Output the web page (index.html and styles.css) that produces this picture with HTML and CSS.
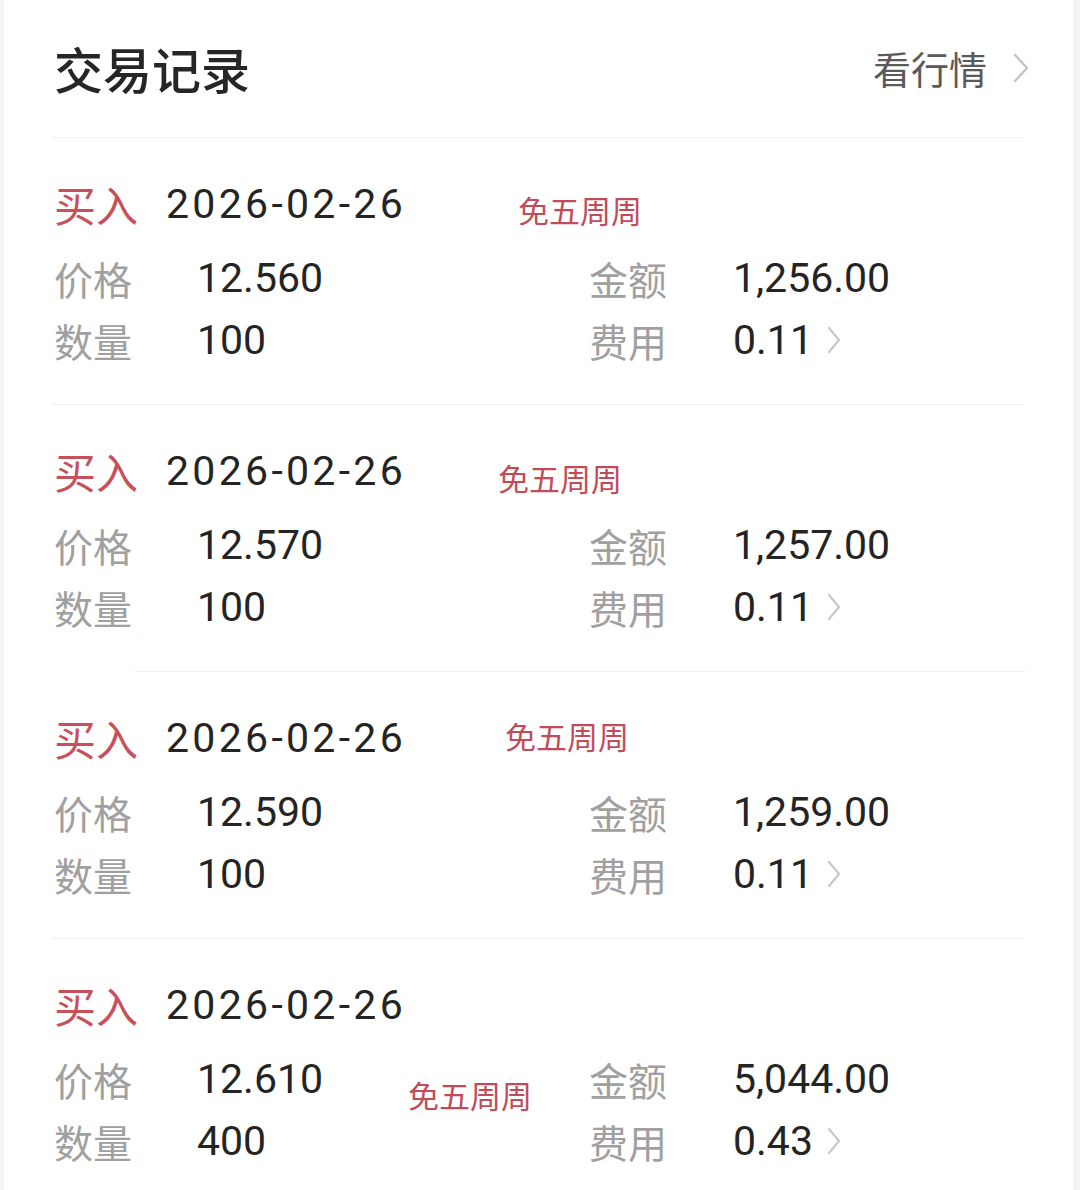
FILE: index.html
```html
<!DOCTYPE html>
<html lang="zh-CN">
<head>
<meta charset="utf-8">
<title>交易记录</title>
<link rel="stylesheet" href="styles.css">
</head>
<body>
<div class="page">
  <header class="header">
    <h1 class="title">交易记录</h1>
    <div class="market">看行情
      <svg class="chev-lg" viewBox="0 0 20 32" width="20" height="32"><path d="M4 3 L16 16 L4 29" fill="none" stroke="#c4c4c4" stroke-width="2.4" stroke-linecap="round" stroke-linejoin="round"/></svg>
    </div>
  </header>

  <section class="record">
    <div class="rec-head"><span class="side">买入</span><span class="date">2026-02-26</span></div>
    <div class="grid">
      <span class="lbl">价格</span><span class="val">12.560</span>
      <span class="lbl">金额</span><span class="val">1,256.00</span>
      <span class="lbl">数量</span><span class="val">100</span>
      <span class="lbl">费用</span><span class="val">0.11<svg class="chev" viewBox="0 0 18 30" width="18" height="30"><path d="M4 3 L14 15 L4 27" fill="none" stroke="#c8c8c8" stroke-width="2.2" stroke-linecap="round" stroke-linejoin="round"/></svg></span>
    </div>
    <span class="tag tag1">免五周周</span>
  </section>

  <section class="record short-line">
    <div class="rec-head"><span class="side">买入</span><span class="date">2026-02-26</span></div>
    <div class="grid">
      <span class="lbl">价格</span><span class="val">12.570</span>
      <span class="lbl">金额</span><span class="val">1,257.00</span>
      <span class="lbl">数量</span><span class="val">100</span>
      <span class="lbl">费用</span><span class="val">0.11<svg class="chev" viewBox="0 0 18 30" width="18" height="30"><path d="M4 3 L14 15 L4 27" fill="none" stroke="#c8c8c8" stroke-width="2.2" stroke-linecap="round" stroke-linejoin="round"/></svg></span>
    </div>
    <span class="tag tag2">免五周周</span>
  </section>

  <section class="record">
    <div class="rec-head"><span class="side">买入</span><span class="date">2026-02-26</span></div>
    <div class="grid">
      <span class="lbl">价格</span><span class="val">12.590</span>
      <span class="lbl">金额</span><span class="val">1,259.00</span>
      <span class="lbl">数量</span><span class="val">100</span>
      <span class="lbl">费用</span><span class="val">0.11<svg class="chev" viewBox="0 0 18 30" width="18" height="30"><path d="M4 3 L14 15 L4 27" fill="none" stroke="#c8c8c8" stroke-width="2.2" stroke-linecap="round" stroke-linejoin="round"/></svg></span>
    </div>
    <span class="tag tag3">免五周周</span>
  </section>

  <section class="record last">
    <div class="rec-head"><span class="side">买入</span><span class="date">2026-02-26</span></div>
    <div class="grid">
      <span class="lbl">价格</span><span class="val">12.610</span>
      <span class="lbl">金额</span><span class="val">5,044.00</span>
      <span class="lbl">数量</span><span class="val">400</span>
      <span class="lbl">费用</span><span class="val">0.43<svg class="chev" viewBox="0 0 18 30" width="18" height="30"><path d="M4 3 L14 15 L4 27" fill="none" stroke="#c8c8c8" stroke-width="2.2" stroke-linecap="round" stroke-linejoin="round"/></svg></span>
    </div>
    <span class="tag tag4">免五周周</span>
  </section>
</div>
</body>
</html>
```

FILE: styles.css
```css
* { box-sizing: border-box; }
html, body {
  margin: 0;
  padding: 0;
  background: #f4f4f4;
}
body {
  font-family: "Noto Sans CJK SC", "Noto Sans", sans-serif;
  color: #222;
}
.page {
  margin: 0 7px 0 4px;
  background: #fff;
  min-height: 1190px;
  overflow: hidden;
}
.header {
  display: flex;
  align-items: center;
  justify-content: space-between;
  height: 138px;
  margin: 0 48px;
  padding: 0 0 2px 2px;
  border-bottom: 1px solid #f0f0f0;
}
.title {
  margin: 0;
  font-size: 49px;
  font-weight: 500;
  line-height: 60px;
  color: #262626;
}
.market {
  display: flex;
  align-items: center;
  gap: 24px;
  font-size: 38px;
  color: #5a5a5a;
  line-height: 50px;
  margin-right: -6px;
}
.chev-lg { display: block; }

.record {
  position: relative;
  margin: 0 48px;
  padding: 35px 0 33px 2px;
  border-bottom: 1px solid #f0f0f0;
  height: 267px;
}
.record.short-line { border-bottom: none; }
.record.short-line::after {
  content: "";
  position: absolute;
  left: 83px;
  right: 0;
  bottom: 0;
  height: 1px;
  background: #f0f0f0;
}
.record.last { border-bottom: none; }

.rec-head {
  display: flex;
  align-items: center;
  height: 62px;
  gap: 28px;
}
.side {
  font-size: 42px;
  color: #c8505b;
  line-height: 62px;
}
.date {
  font-family: Roboto, "Noto Sans", sans-serif;
  font-size: 41px;
  line-height: 62px;
  color: #242424;
  letter-spacing: 3.3px;
}
.grid {
  margin-top: 12px;
  display: grid;
  grid-template-columns: 143px 392px 144px auto;
  grid-auto-rows: 62px;
  align-items: center;
}
.lbl {
  font-size: 39px;
  color: #a0a0a0;
  line-height: 62px;
}
.val {
  display: flex;
  align-items: center;
  gap: 12px;
  font-family: Roboto, "Noto Sans", sans-serif;
  font-size: 41px;
  color: #242424;
  line-height: 62px;
}
.chev { display: block; }

.tag {
  position: absolute;
  font-size: 31px;
  line-height: 40px;
  color: #c24b5a;
  white-space: nowrap;
}
.tag1 { left: 466px; top: 52px; }
.tag2 { left: 446px; top: 53px; }
.tag3 { left: 453px; top: 44px; }
.tag4 { left: 356px; top: 136px; }
```
